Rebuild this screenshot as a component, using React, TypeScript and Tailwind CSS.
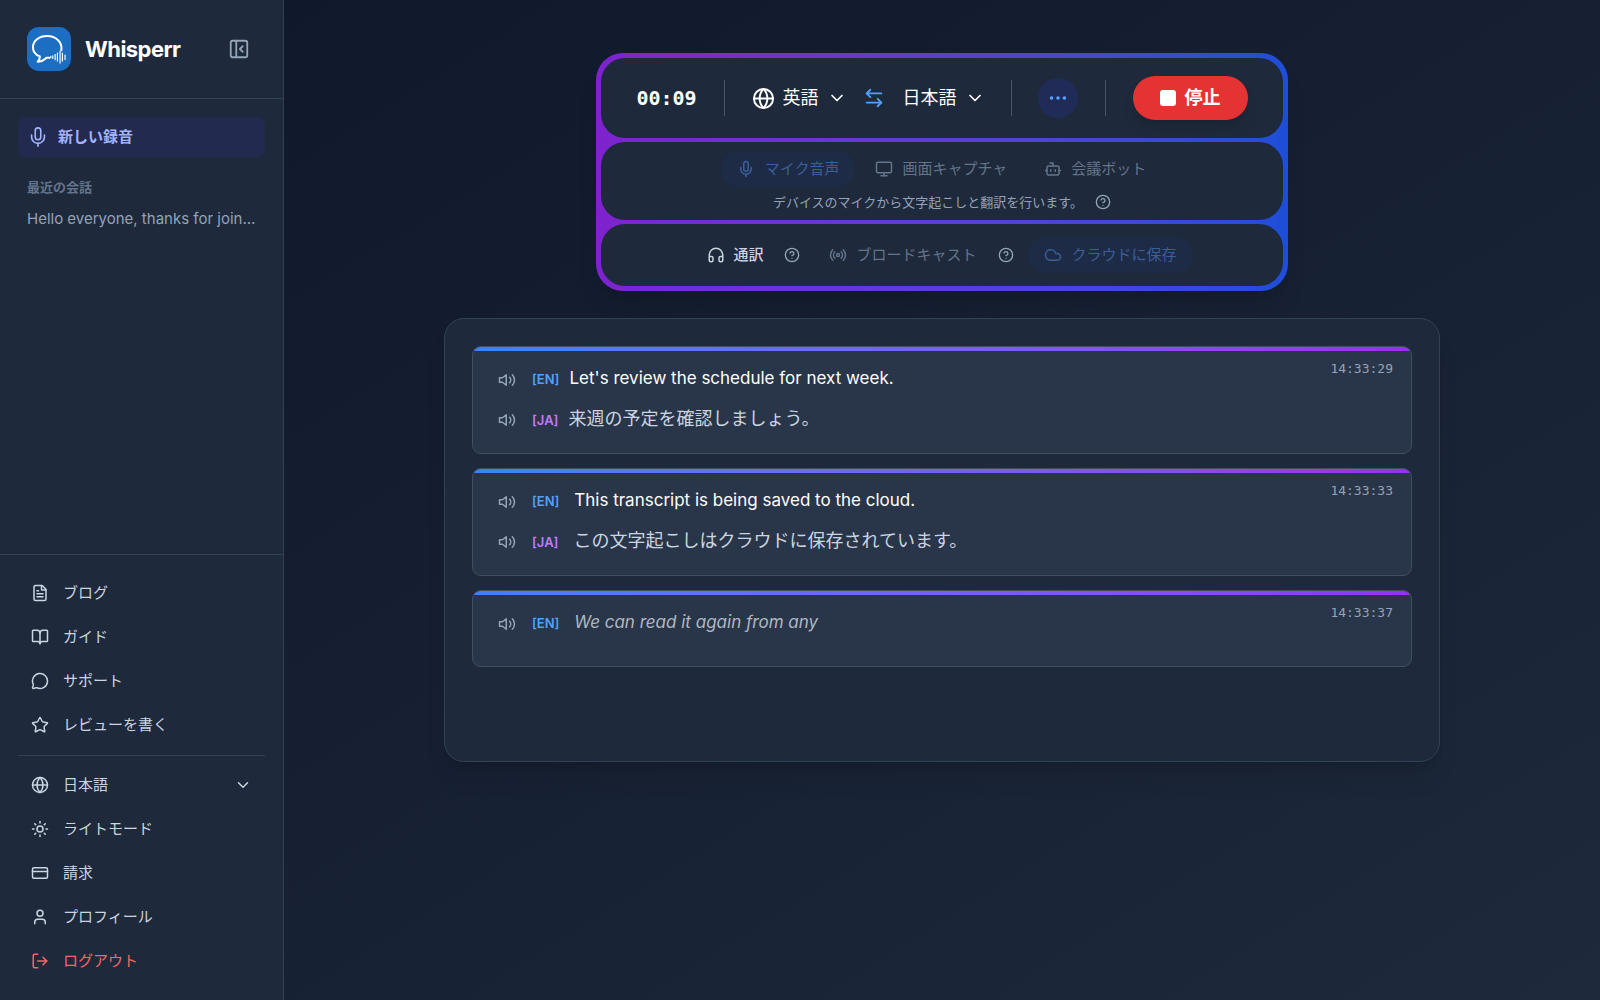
import React from "react";
import {
  ArrowLeftRight,
  BookOpen,
  Bot,
  ChevronDown,
  CircleHelp,
  Cloud,
  CreditCard,
  Ellipsis,
  FileText,
  Globe,
  Headphones,
  LogOut,
  MessageCircle,
  Mic,
  Monitor,
  PanelLeftClose,
  Radio,
  Star,
  Sun,
  User,
} from "lucide-react";

const waveBars = [
  [72, 89, 93],
  [78, 87, 95],
  [85, 83, 99],
  [92, 79, 103],
  [100, 73, 109],
  [107, 79, 103],
  [115, 85, 98],
];

function Logo() {
  return (
    <svg viewBox="0 0 133 133" className="size-11 shrink-0" role="img" aria-label="Whisperr">
      <rect width="133" height="133" rx="36" fill="#1b6ec2" />
      <path
        d="M104 70C107 45 87 27 61 27C36 27 18 42 18 61C18 74 26 84 39 89C39 96 37 101 32 105C43 105 52 100 59 93L68 93"
        fill="none"
        stroke="#fff"
        strokeWidth="6"
        strokeLinecap="round"
        strokeLinejoin="round"
      />
      {waveBars.map(([x, y1, y2]) => (
        <line key={x} x1={x} x2={x} y1={y1} y2={y2} stroke="#fff" strokeWidth="3.5" strokeLinecap="round" />
      ))}
    </svg>
  );
}

function Speaker() {
  return (
    <svg
      viewBox="0 0 24 24"
      className="size-[18px]"
      fill="none"
      stroke="currentColor"
      strokeWidth="2"
      strokeLinecap="round"
      strokeLinejoin="round"
      aria-hidden="true"
    >
      <path d="M11 5 6 9H2v6h4l5 4V5z" />
      <path d="M15.54 8.46a5 5 0 0 1 0 7.07" />
      <path d="M19.07 4.93a10 10 0 0 1 0 14.14" />
    </svg>
  );
}

const navItem = "flex h-10 w-full items-center gap-[14px] rounded-lg px-[13px]";

const links = [
  { icon: FileText, label: "ブログ" },
  { icon: BookOpen, label: "ガイド" },
  { icon: MessageCircle, label: "サポート" },
  { icon: Star, label: "レビューを書く" },
];

const account = [
  { icon: Sun, label: "ライトモード", tone: "" },
  { icon: CreditCard, label: "請求", tone: "" },
  { icon: User, label: "プロフィール", tone: "" },
  { icon: LogOut, label: "ログアウト", tone: "text-[#ff6467]" },
];

function Sidebar() {
  return (
    <aside className="flex w-[284px] shrink-0 flex-col border-r border-[#334155] bg-[#1e293b]">
      <header className="flex h-[99px] shrink-0 items-center border-b border-[#334155] pr-[33px] pl-[27px]">
        <Logo />
        <h1 className="ml-[14px] text-[22px] font-bold tracking-tight text-white">Whisperr</h1>
        <button type="button" aria-label="サイドバーを閉じる" className="ml-auto text-[#94a3b8]">
          <PanelLeftClose size={22} />
        </button>
      </header>

      <div className="flex-1 px-[18px] pt-[18px]">
        <button
          type="button"
          className="flex h-10 w-full items-center gap-[9px] rounded-lg bg-[#232a50] px-[9px] font-bold text-[#a3b3ff]"
        >
          <Mic size={22} strokeWidth={1.75} />
          新しい録音
        </button>
        <h2 className="mt-5 px-[9px] text-[13px] leading-5 font-semibold text-[#64748b]">最近の会話</h2>
        <a href="#conversation" className="mt-2 block pl-[9px] leading-7 whitespace-nowrap text-[#94a3b8]">
          Hello everyone, thanks for join…
        </a>
      </div>

      <nav className="border-t border-[#334155] px-[18px] pt-[18px] pb-[19px] text-[#cbd5e1]">
        <div className="flex flex-col gap-1">
          {links.map(({ icon: Icon, label }) => (
            <a key={label} href="#link" className={navItem}>
              <Icon size={18} />
              {label}
            </a>
          ))}
        </div>
        <div className="mt-[10px] flex flex-col gap-1 border-t border-[#334155] pt-[9px]">
          <label className={navItem}>
            <Globe size={18} />
            <select aria-label="表示言語" className="flex-1 appearance-none bg-transparent">
              <option>日本語</option>
            </select>
            <ChevronDown size={18} />
          </label>
          {account.map(({ icon: Icon, label, tone }) => (
            <button key={label} type="button" className={`${navItem} ${tone}`}>
              <Icon size={18} />
              {label}
            </button>
          ))}
        </div>
      </nav>
    </aside>
  );
}

function Divider() {
  return <div className="h-9 w-px bg-[#475569]" />;
}

function Help({ label }: { label: string }) {
  return (
    <button type="button" aria-label={label} className="text-[#94a3b8]">
      <CircleHelp size={16} />
    </button>
  );
}

function Controls() {
  return (
    <section className="flex w-full max-w-[692px] flex-col gap-1 rounded-[27px] bg-linear-to-r from-[#7e22ce] to-[#1d4ed8] p-[5px] shadow-xl">
      <div className="flex h-20 items-center justify-center rounded-[24px] bg-[#1e293b] text-lg text-white">
        <time className="font-['DejaVu_Sans_Mono',monospace] text-xl font-bold">00:09</time>
        <div className="mx-[27px]">
          <Divider />
        </div>
        <label className="flex items-center gap-2">
          <Globe size={23} />
          <select aria-label="翻訳元の言語" className="appearance-none bg-transparent">
            <option>英語</option>
          </select>
          <ChevronDown size={20} />
        </label>
        <button type="button" aria-label="言語を入れ替える" className="mr-[18px] ml-4 text-[#51a2ff]">
          <ArrowLeftRight size={22} />
        </button>
        <label className="flex items-center gap-2">
          <select aria-label="翻訳先の言語" className="appearance-none bg-transparent">
            <option>日本語</option>
          </select>
          <ChevronDown size={20} />
        </label>
        <div className="mx-[26px]">
          <Divider />
        </div>
        <button
          type="button"
          aria-label="その他"
          className="flex size-10 items-center justify-center rounded-full bg-[#202c57] text-[#51a2ff]"
        >
          <Ellipsis size={22} />
        </button>
        <div className="mx-[27px]">
          <Divider />
        </div>
        <button
          type="button"
          className="flex h-11 items-center gap-[9px] rounded-full bg-[#e53333] px-[27px] font-bold shadow-lg"
        >
          <span className="size-4 rounded-[3px] bg-white" />
          停止
        </button>
      </div>

      <div className="flex h-[78px] flex-col items-center rounded-[24px] bg-[#1e293b] pt-[9px]">
        <div className="flex items-center gap-2 text-[#64748b]">
          <button
            type="button"
            className="flex h-9 items-center gap-[10px] rounded-full bg-[#1e2b47] px-4 text-[#3a5f98]"
          >
            <Mic size={18} />
            マイク音声
          </button>
          <button type="button" className="flex h-9 items-center gap-[9px] pr-[17px] pl-3">
            <Monitor size={18} />
            画面キャプチャ
          </button>
          <button type="button" className="flex h-9 items-center gap-[9px] pr-[17px] pl-3">
            <Bot size={18} />
            会議ボット
          </button>
        </div>
        <div className="mt-[5px] flex items-center gap-3 text-[13px] leading-5 text-[#94a3b8]">
          <p>デバイスのマイクから文字起こしと翻訳を行います。</p>
          <Help label="マイク音声について" />
        </div>
      </div>

      <div className="flex h-[62px] items-center justify-center rounded-[24px] bg-[#1e293b] text-[#64748b]">
        <button type="button" className="flex items-center gap-2 pl-4 font-medium text-[#cbd5e1]">
          <Headphones size={18} />
          通訳
        </button>
        <div className="mr-[29px] ml-[21px] flex">
          <Help label="通訳について" />
        </div>
        <button type="button" className="flex items-center gap-[9px]">
          <Radio size={18} />
          ブロードキャスト
        </button>
        <div className="mr-[14px] ml-[21px] flex">
          <Help label="ブロードキャストについて" />
        </div>
        <button
          type="button"
          className="flex h-9 items-center gap-[10px] rounded-full bg-[#1e2b47] px-4 text-[#3a5f98]"
        >
          <Cloud size={18} />
          クラウドに保存
        </button>
      </div>
    </section>
  );
}

const entries = [
  { time: "14:33:29", en: "Let's review the schedule for next week.", ja: "来週の予定を確認しましょう。" },
  {
    time: "14:33:33",
    en: " This transcript is being saved to the cloud.",
    ja: " この文字起こしはクラウドに保存されています。",
  },
  { time: "14:33:37", en: " We can read it again from any", pending: true },
];

function Line({ tag, text, tone, textTone }: { tag: string; text: string; tone: string; textTone: string }) {
  return (
    <div className="flex h-8 items-center">
      <button type="button" aria-label={`${tag} を再生`} className="mt-1 mr-4 text-[#94a3b8]">
        <Speaker />
      </button>
      <p className={`pt-0.5 whitespace-pre-wrap ${textTone}`}>
        <span className={`mr-[10px] text-[13px] font-semibold not-italic ${tone}`}>[{tag}]</span>
        {text}
      </p>
    </div>
  );
}

function Transcript() {
  return (
    <section className="mt-[27px] flex min-h-[444px] w-full max-w-[996px] flex-col gap-[14px] rounded-[20px] border border-[#334155] bg-[#1e293b] p-[27px] shadow-xl">
      {entries.map((entry) => (
        <article key={entry.time} className="overflow-hidden rounded-[9px] border border-[#414e62] bg-[#293548]">
          <div className="h-1 bg-linear-to-r from-[#3b82f6] to-[#9333ea]" />
          <div className="flex min-h-[71px] items-start justify-between pt-[11px] pr-[18px] pb-[19px] pl-[25px]">
            <div className="flex flex-col gap-2">
              <Line
                tag="EN"
                text={entry.en}
                tone="text-[#51a2ff]"
                textTone={entry.pending ? "text-[17px] italic text-[#b0b8c4]" : "text-[17px] text-white"}
              />
              {entry.ja && (
                <Line tag="JA" text={entry.ja} tone="text-[#c27aff]" textTone="text-lg text-[#cbd5e1]" />
              )}
            </div>
            <time className="font-['DejaVu_Sans_Mono',monospace] text-[13px] leading-[14px] text-[#94a3b8]">
              {entry.time}
            </time>
          </div>
        </article>
      ))}
    </section>
  );
}

export default function App() {
  return (
    <div
      lang="ja"
      className="flex min-h-screen bg-linear-to-br from-[#0f172a] to-[#1e293b] font-[Inter,'Noto_Sans_CJK_JP',sans-serif] text-[15px]"
    >
      <Sidebar />
      <main className="flex min-w-0 flex-1 flex-col items-center px-7 pt-[53px]">
        <Controls />
        <Transcript />
      </main>
    </div>
  );
}
